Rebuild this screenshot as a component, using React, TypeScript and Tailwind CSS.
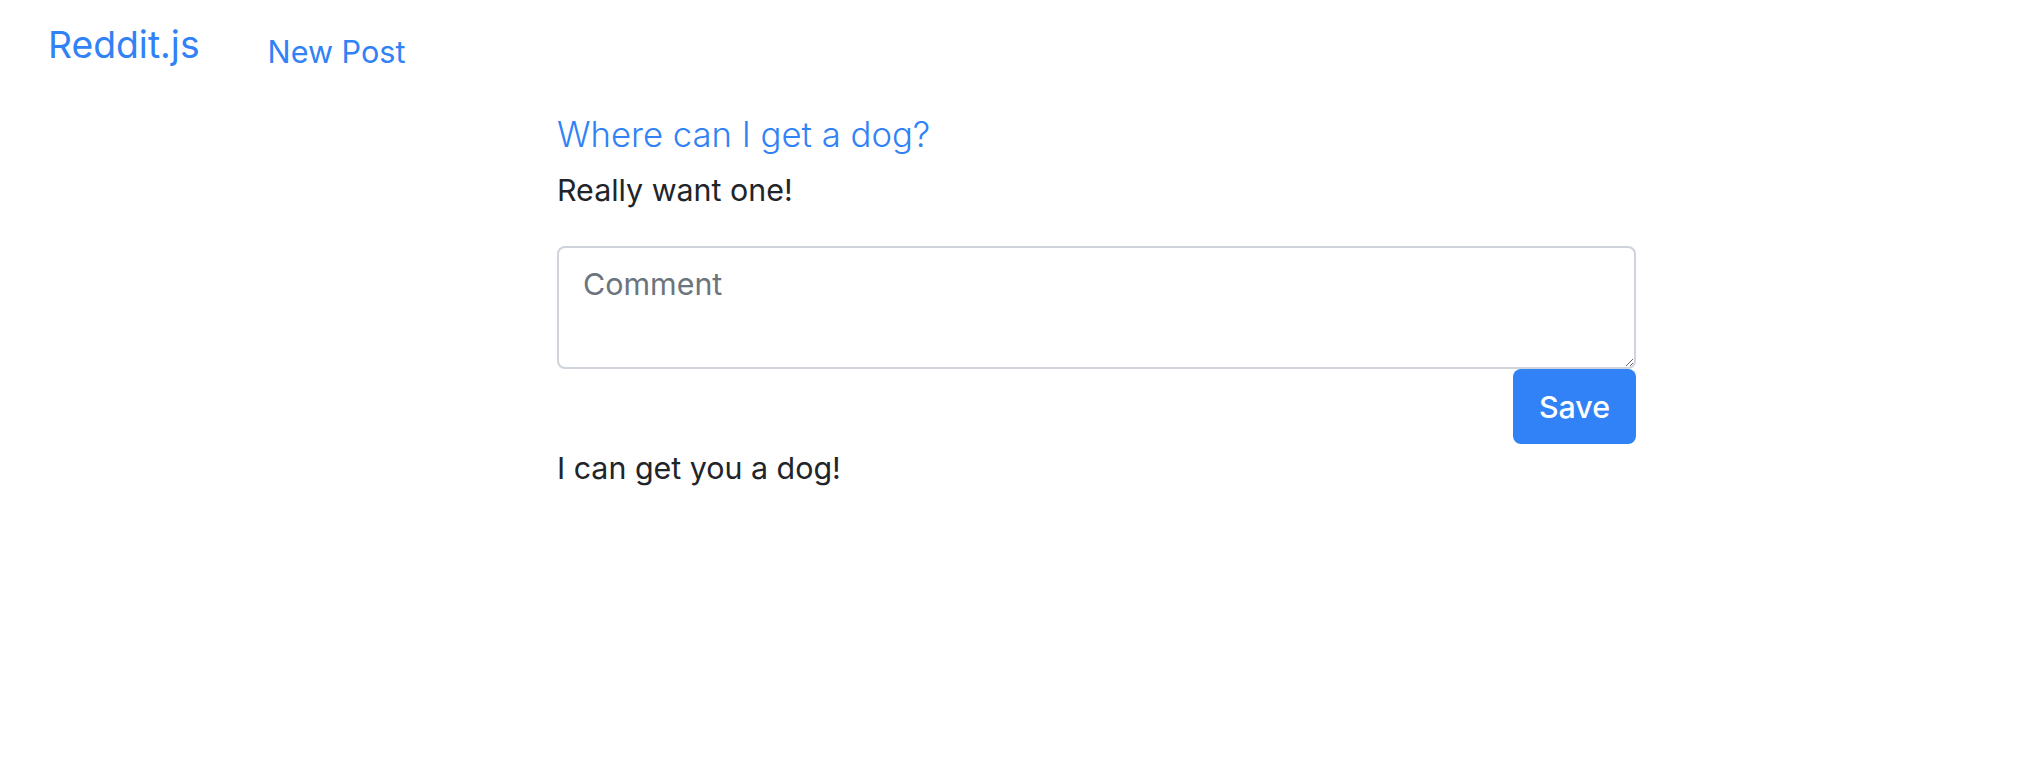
const FONT = "font-['Inter','Helvetica_Neue','Liberation_Sans',sans-serif]";

const comments = ['I can get you a dog!'];

export default function App() {
  return (
    <div className={`min-h-screen bg-white text-[#212529] ${FONT}`}>
      <header className="flex items-start h-[80px] pl-[48px] pt-[15px] gap-[68px]">
        <a href="#" className="text-[37.3px] leading-[60px] text-[#3182f6]">
          Reddit.js
        </a>
        <a href="#" className="mt-[13px] text-[30.6px] leading-[48px] text-[#3182f6]">
          New Post
        </a>
      </header>

      <main className="ml-[557px] w-[1079px] pt-[30px] flex flex-col">
        <h5 className="text-[34.7px] leading-[48px] font-light text-[#3182f6]">
          Where can I get a dog?
        </h5>
        <p className="mt-[8px] text-[30.4px] leading-[48px]">Really want one!</p>

        <form className="mt-[32px] flex flex-col" onSubmit={(e) => e.preventDefault()}>
          <textarea
            placeholder="Comment"
            className="h-[123px] w-full rounded-[8px] border-2 border-[#ced4da] px-[24px] py-[12px] text-[30.4px] leading-[48px] text-[#495057] placeholder:text-[#6c757d] outline-none"
          />
          <button
            type="submit"
            className="self-end w-[123px] h-[75px] rounded-[8px] bg-[#3182f6] text-white text-[30.4px] leading-[48px] font-medium"
          >
            Save
          </button>
        </form>

        {comments.map((c) => (
          <p key={c} className="text-[30.4px] leading-[48px]">
            {c}
          </p>
        ))}
      </main>
    </div>
  );
}
